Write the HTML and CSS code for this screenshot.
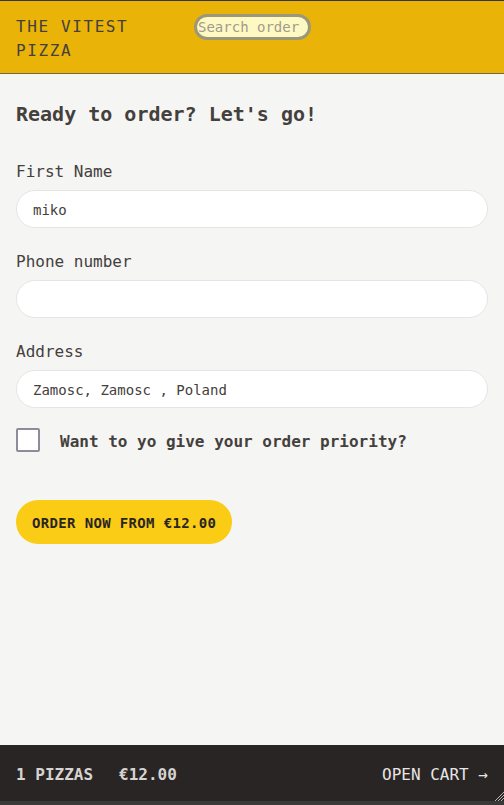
FILE: index.html
```html
<!DOCTYPE html>
<html lang="en">
<head>
<meta charset="utf-8">
<title>The Vitest Pizza</title>
<link rel="stylesheet" href="styles.css">
</head>
<body>
<div class="app">
  <header class="header">
    <a class="logo" href="#">The Vitest Pizza</a>
    <input class="search" type="text" placeholder="Search order #">
  </header>
  <main class="main">
    <h2 class="title">Ready to order? Let's go!</h2>
    <form class="form">
      <div class="field">
        <label class="label">First Name</label>
        <input class="input" type="text" value="miko">
      </div>
      <div class="field">
        <label class="label">Phone number</label>
        <input class="input" type="tel">
      </div>
      <div class="field">
        <label class="label">Address</label>
        <input class="input" type="text" value="Zamosc, Zamosc , Poland">
      </div>
      <div class="check-row">
        <input class="checkbox" type="checkbox" id="priority">
        <label class="check-label" for="priority">Want to yo give your order priority?</label>
      </div>
      <button class="btn" type="button">Order now from €12.00</button>
    </form>
  </main>
  <footer class="footer">
    <p class="summary"><span>1 pizzas</span><span>€12.00</span></p>
    <a class="open-cart" href="#">Open cart →</a>
    <svg class="grip" width="10" height="10" viewBox="0 0 10 10"><path d="M10 1 L1 10 M10 4 L4 10 M10 7 L7 10" stroke="#b8b6b4" stroke-width="1"/></svg>
  </footer>
</div>
</body>
</html>
```
FILE: styles.css
```css
* { box-sizing: border-box; }
html, body { margin: 0; padding: 0; }
body {
  font-family: "DejaVu Sans Mono", monospace;
  color: #44403c;
  background: #f5f5f4;
}
.app {
  display: grid;
  grid-template-rows: auto 1fr auto;
  height: 100vh;
}
.header {
  display: flex;
  align-items: flex-start;
  background: #eab308;
  border-top: 1px solid #35353d;
  border-bottom: 1px solid #6f6748;
  padding: 14px 16px 10px;
}
.logo {
  width: 160px;
  font-size: 16px;
  line-height: 24px;
  letter-spacing: 0.1em;
  text-transform: uppercase;
  color: #44403c;
  text-decoration: none;
}
.search {
  margin-left: 18px;
  margin-top: -1px;
  width: 117px;
  height: 26px;
  border: 3px solid #9a9878;
  border-radius: 9999px;
  background: #fef9c3;
  padding: 0 1px;
  font-family: "DejaVu Sans Mono", monospace;
  font-size: 14px;
  color: #44403c;
  outline: none;
}
.search::placeholder { color: #a29a8e; }
.main {
  padding: 24px 16px;
}
.title {
  margin: 0 0 30px;
  padding-top: 2px;
  font-size: 20px;
  line-height: 28px;
  font-weight: 700;
}
.field { margin-bottom: 20px; }
.label {
  display: block;
  padding-top: 2px;
  margin-bottom: 6px;
  font-size: 16px;
  line-height: 24px;
}
.input {
  display: block;
  width: 100%;
  border: 1px solid #e7e5e4;
  border-radius: 9999px;
  background: #fff;
  padding: 9px 16px 7px;
  font-family: "DejaVu Sans Mono", monospace;
  font-size: 14px;
  line-height: 20px;
  color: #44403c;
  outline: none;
}
.check-row {
  display: flex;
  align-items: flex-start;
  gap: 20px;
  margin-bottom: 46px;
}
.checkbox {
  appearance: none;
  -webkit-appearance: none;
  margin: 0;
  width: 24px;
  height: 24px;
  border: 2px solid #8e8c9a;
  border-radius: 2px;
  background: #fff;
}
.check-label {
  padding-top: 2px;
  font-size: 16px;
  line-height: 24px;
  font-weight: 700;
}
.btn {
  display: inline-block;
  border: 0;
  border-radius: 9999px;
  background: #facc15;
  padding: 13px 16px 11px;
  font-family: "DejaVu Sans Mono", monospace;
  font-size: 14px;
  line-height: 20px;
  font-weight: 700;
  letter-spacing: 0.025em;
  text-transform: uppercase;
  color: #292524;
}
.footer {
  position: relative;
  display: flex;
  align-items: center;
  justify-content: space-between;
  background: #292524;
  border-bottom: 4px solid #3a3938;
  padding: 18px 16px 14px;
  color: #e7e5e4;
  text-transform: uppercase;
  font-size: 16px;
  line-height: 24px;
}
.summary {
  margin: 0;
  display: flex;
  gap: 26px;
  font-weight: 700;
  color: #d6d3d1;
}
.open-cart {
  color: #e7e5e4;
  text-decoration: none;
}
.grip {
  position: absolute;
  right: 0;
  bottom: 0;
}
```
